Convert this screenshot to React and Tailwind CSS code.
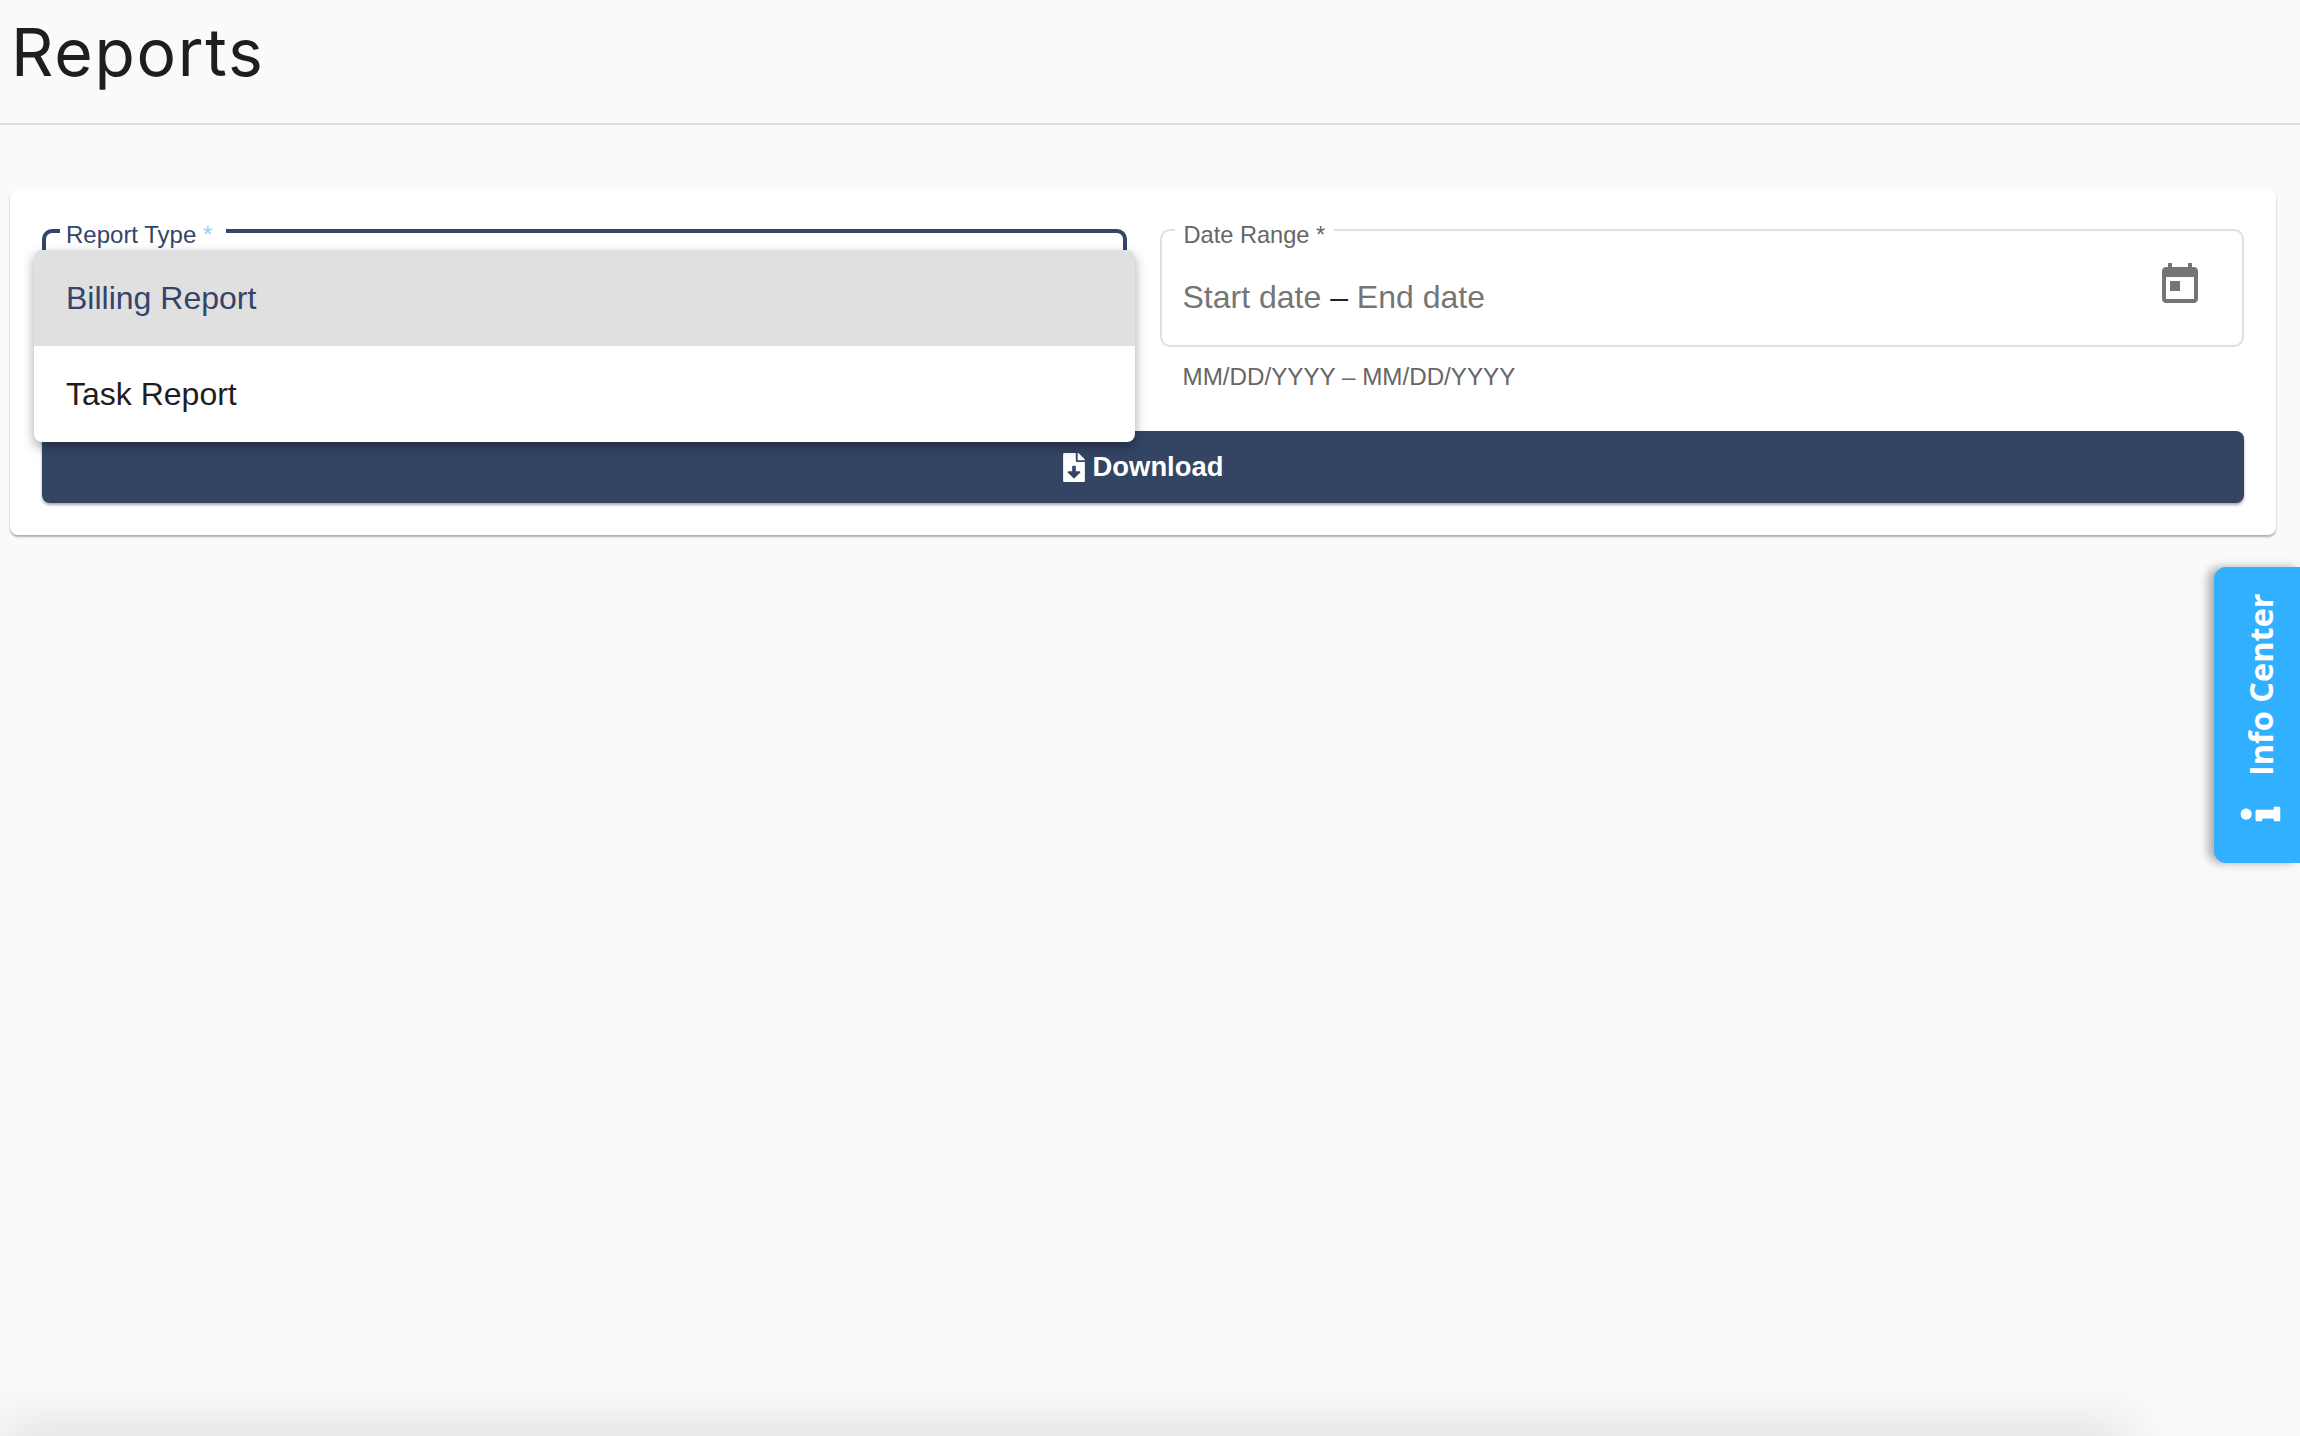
import { FaFileDownload, FaInfo } from "react-icons/fa";

function TodayIcon() {
  return (
    <svg viewBox="0 0 24 24" className="w-12 h-12 fill-[#757575]">
      <path d="M19 3h-1V1h-2v2H8V1H6v2H5c-1.11 0-1.99.9-1.99 2L3 19c0 1.1.89 2 2 2h14c1.1 0 2-.9 2-2V5c0-1.1-.9-2-2-2zm0 16H5V8h14v11zM7 10h5v5H7z" />
    </svg>
  );
}

export default function App() {
  return (
    <div className="relative h-screen overflow-hidden bg-[#fafafa] font-['Liberation_Sans',sans-serif]">
      <header className="h-[125px] border-b-2 border-[#dddddd] pl-[11px] pt-[17px]">
        <h1 className="font-['Inter',sans-serif] font-[375] text-[66px] leading-[70px] tracking-[1.7px] text-[#1e1e1e]">
          Reports
        </h1>
      </header>

      <main className="pl-[10px] pr-[24px] pt-[64px]">
        <section className="h-[346px] rounded-[8px] bg-white px-[32px] pt-[40px] shadow-[0_2px_2px_rgba(0,0,0,0.3)]">
          <div className="grid grid-cols-2 gap-x-[33px]">
            <div className="relative">
              <div className="h-[118px] rounded-[10px] border-4 border-[#34446a]" />
              <label className="absolute left-[18px] top-[-7px] bg-white pl-[6px] pr-[14px] text-[24px] leading-[26px] text-[#34446a]">
                Report Type <span className="text-[#8fd4f8]">*</span>
              </label>
              <ul className="absolute left-[-8px] top-[21px] z-10 w-[1101px] overflow-hidden rounded-[8px] bg-white text-[32px] shadow-[0_5px_12px_rgba(0,0,0,0.35)]">
                <li className="flex h-[96px] items-center bg-[#e0e0e0] pl-[32px] text-[#34446a]">Billing Report</li>
                <li className="flex h-[96px] items-center pl-[32px] text-[#1e1e1e]">Task Report</li>
              </ul>
            </div>

            <div>
              <div className="relative flex h-[118px] items-center justify-between rounded-[10px] border-2 border-[#e0e0e0] pl-[21px] pr-[38px]">
                <label className="absolute left-[13px] top-[-9px] bg-white pl-[9px] pr-[9px] text-[23.6px] leading-[26px] text-[#666666]">
                  Date Range *
                </label>
                <div className="pt-[18px] text-[32px] text-[#757575]">
                  Start date <span className="text-[#222222]">–</span> End date
                </div>
                <div className="-mt-[6px]">
                  <TodayIcon />
                </div>
              </div>
              <p className="pl-[23px] pt-[16px] text-[24.2px] leading-[28px] text-[#666666]">MM/DD/YYYY – MM/DD/YYYY</p>
            </div>
          </div>

          <button className="mt-[40px] flex h-[72px] w-full items-center justify-center gap-[8px] rounded-[8px] bg-[#344564] text-[27.4px] font-semibold text-white shadow-[0_2px_3px_rgba(0,0,0,0.35)]">
            <FaFileDownload className="h-[29px] w-[22px]" />
            Download
          </button>
        </section>
      </main>

      <aside className="absolute right-0 top-[567px] flex h-[296px] w-[86px] rotate-180 items-center justify-center gap-[18px] rounded-r-[12px] bg-[#31b0ff] pr-[8px] pt-[2px] text-white shadow-[6px_0_10px_rgba(0,0,0,0.3)] [writing-mode:vertical-rl]">
        <FaInfo className="h-[40px] w-[15px] rotate-90" />
        <span className="font-['Open_Sans',sans-serif] text-[32.5px] font-bold leading-none">Info Center</span>
      </aside>

      <div className="absolute left-0 top-[1436px] h-[20px] w-[2130px] shadow-[0_0_55px_rgba(0,0,0,0.25)]" />
    </div>
  );
}
